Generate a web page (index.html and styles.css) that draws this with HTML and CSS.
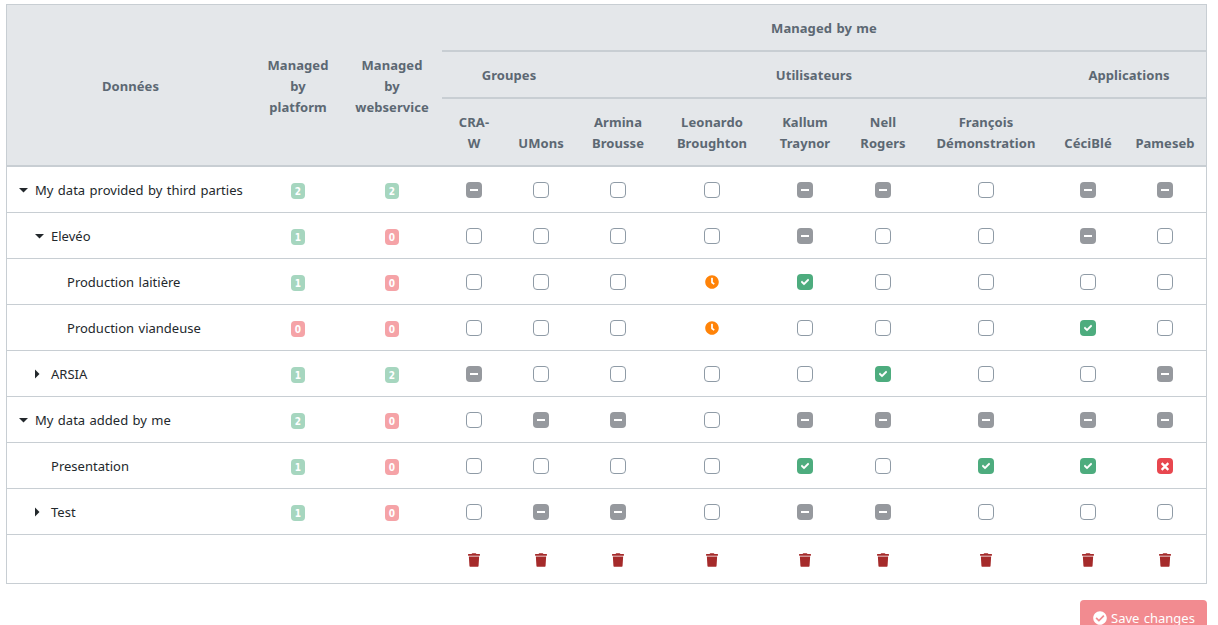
FILE: index.html
```html
<!DOCTYPE html>
<html lang="fr">
<head>
<meta charset="utf-8">
<title>Permissions</title>
<link rel="stylesheet" href="styles.css">
</head>
<body>
<svg class="sprite" aria-hidden="true">
  <symbol id="check" viewBox="0 0 512 512"><path stroke="#fff" stroke-width="40" d="M173.9 439.4L7.5 273c-10-10-10-26.200 0-36.200l36.200-36.200c10-10 26.200-10 36.200 0L192 312.700 432.100 72.600c10-10 26.200-10 36.200 0l36.200 36.200c10 10 10 26.200 0 36.200L210.100 439.400c-10 10-26.200 10-36.200 0z"/></symbol>
  <symbol id="times" viewBox="0 0 352 512"><path stroke="#fff" stroke-width="24" d="M242.700 256l100-100c12.300-12.300 12.300-32.200 0-44.500l-22.200-22.200c-12.300-12.300-32.200-12.300-44.500 0L176 189.300 76 89.300c-12.300-12.300-32.200-12.300-44.500 0L9.200 111.500c-12.300 12.300-12.300 32.200 0 44.500l100 100-100 100c-12.300 12.300-12.300 32.200 0 44.500l22.200 22.200c12.300 12.300 32.200 12.300 44.500 0l100-100 100 100c12.300 12.300 32.200 12.300 44.500 0l22.200-22.200c12.300-12.300 12.300-32.200 0-44.500z"/></symbol>
  <symbol id="clock" viewBox="0 0 512 512"><path d="M256 8C119 8 8 119 8 256s111 248 248 248 248-111 248-248S393 8 256 8zm92.500 313l-20 25a16 16 0 0 1-22.500 2.500l-67-49.700a40 40 0 0 1-15-31.200V112a16 16 0 0 1 16-16h32a16 16 0 0 1 16 16v144l58 42.500a16 16 0 0 1 2.500 22.500z"/></symbol>
  <symbol id="trash" viewBox="0 0 448 512"><path d="M432 32H312l-9.400-18.700A24 24 0 0 0 281.100 0H166.800a23.700 23.700 0 0 0-21.400 13.300L136 32H16A16 16 0 0 0 0 48v32a16 16 0 0 0 16 16h416a16 16 0 0 0 16-16V48a16 16 0 0 0-16-16zM53.200 467a48 48 0 0 0 47.900 45h245.800a48 48 0 0 0 47.900-45L416 128H32z"/></symbol>
  <symbol id="check-circle" viewBox="0 0 512 512"><path d="M504 256c0 137-111 248-248 248S8 393 8 256 119 8 256 8s248 111 248 248zM227.300 387.300l184-184c6.200-6.200 6.200-16.400 0-22.600l-22.600-22.600c-6.200-6.200-16.400-6.200-22.600 0L216 308.100l-70.100-70.100c-6.200-6.200-16.400-6.200-22.600 0l-22.600 22.600c-6.200 6.200-6.200 16.400 0 22.600l104 104c6.200 6.300 16.400 6.300 22.600.100z"/></symbol>
</svg>
<table class="grid">
  <colgroup>
    <col class="c-data"><col class="c-platform"><col class="c-web"><col class="c-craw"><col class="c-umons"><col class="c-armina"><col class="c-leonardo"><col class="c-kallum"><col class="c-nell"><col class="c-francois"><col class="c-ceci"><col class="c-pameseb">
  </colgroup>
  <thead>
    <tr><th rowspan="3" class="mid">Données</th><th rowspan="3" class="mid">Managed by platform</th><th rowspan="3" class="mid">Managed by webservice</th><th colspan="9">Managed by me</th></tr>
    <tr><th colspan="2">Groupes</th><th colspan="5">Utilisateurs</th><th colspan="2">Applications</th></tr>
    <tr><th>CRA-W</th><th>UMons</th><th>Armina Brousse</th><th>Leonardo Broughton</th><th>Kallum Traynor</th><th>Nell Rogers</th><th>François Démonstration</th><th>CéciBlé</th><th>Pameseb</th></tr>
  </thead>
  <tbody id="rows"></tbody>
</table>
<div class="actions"><button class="save"><svg><use href="#check-circle"/></svg>Save changes</button></div>
<script src="app.js"></script>
</body>
</html>
```
FILE: styles.css
```css
* { box-sizing: border-box; }
html { overflow: hidden; }
body { margin: 0; padding: 4px 11px 0 6px; font: 13px/21px "Noto Sans", sans-serif; color: #23282c; background: #fff; }
.sprite { display: none; }
.grid { width: 1201px; table-layout: fixed; border: 1px solid #c8ced3; border-collapse: separate; border-spacing: 0; }
.c-data { width: 247px; }
.c-platform { width: 88px; }
.c-web { width: 100px; }
.c-craw { width: 64px; }
.c-umons { width: 70px; }
.c-armina { width: 84px; }
.c-leonardo { width: 104px; }
.c-kallum { width: 82px; }
.c-nell { width: 74px; }
.c-francois { width: 132px; }
.c-ceci { width: 72px; }
.c-pameseb { width: 82px; }
th { padding: 13px 11px 11px; color: #5c6873; background: #e4e7ea; border-bottom: 2px solid #c8ced3; vertical-align: bottom; text-align: center; font-weight: 700; letter-spacing: .06px; word-spacing: 1px; }
th.mid { vertical-align: middle; }
td { height: 46px; padding: 0; border-bottom: 1px solid #c8ced3; text-align: center; vertical-align: middle; }
tr:last-child td { height: 48px; border-bottom: 0; }
.label { display: flex; align-items: center; padding-left: 12px; letter-spacing: .01px; word-spacing: 1px; }
.label span { padding-top: 2px; }
.depth-1 { padding-left: 28px; }
.depth-2 { padding-left: 44px; }
.depth-3 { padding-left: 60px; }
.arrow { width: 16px; height: 10px; fill: #23282c; }
.badge { display: block; width: 14px; height: 16px; margin: 3px auto 0; border-radius: 4px; color: #fff; font: 700 10px/17px "DejaVu Sans Condensed", "DejaVu Sans", sans-serif; }
.badge.some { background: #a6d6bf; }
.badge.none { background: #f5a3a7; }
.box { display: flex; align-items: center; justify-content: center; width: 16px; height: 16px; margin: 1px auto 0; border-radius: 4px; fill: #fff; }
.box.off { border: 1px solid #8f9ba6; }
.box.partial { background: #96999e; }
.box.partial::before { content: ""; width: 8px; height: 2px; background: #fff; }
.box.yes { background: #4dac7e; }
.box.no { background: #e8474f; }
.box.yes svg { width: 8px; height: 8px; }
.box.no svg { width: 8px; height: 11px; }
.wait { display: block; width: 14px; height: 14px; margin: 0 auto; fill: #ff8308; }
.trash { display: block; width: 12px; height: 14px; margin: 2px auto 0; fill: #a52a2a; }
.actions { display: flex; justify-content: flex-end; margin-top: 16px; }
.save { display: flex; align-items: center; gap: 4px; width: 127px; height: 35px; padding: 1px 13px 0; border: 0; border-radius: 4px; background: #f28b90; color: #fff; font: 13px/21px "Noto Sans", sans-serif; word-spacing: 1px; white-space: nowrap; }
.save svg { flex: none; width: 14px; height: 14px; fill: #fff; }
```
FILE: app.js
```js
// Cell codes: o = unchecked, p = partial, y = granted, n = refused, w = pending
const rows = [
  [0, 'down', 'My data provided by third parties', 2, 2, 'poooppopp'],
  [1, 'down', 'Elevéo', 1, 0, 'oooopoopo'],
  [2, '', 'Production laitière', 1, 0, 'ooowyoooo'],
  [2, '', 'Production viandeuse', 0, 0, 'ooowoooyo'],
  [1, 'right', 'ARSIA', 1, 2, 'pooooyoop'],
  [0, 'down', 'My data added by me', 2, 0, 'oppoppppp'],
  [1, '', 'Presentation', 1, 0, 'ooooyoyyn'],
  [1, 'right', 'Test', 1, 0, 'oppoppooo']
];
const cells = {
  o: '<span class="box off"></span>',
  p: '<span class="box partial"></span>',
  y: '<span class="box yes"><svg><use href="#check"/></svg></span>',
  n: '<span class="box no"><svg><use href="#times"/></svg></span>',
  w: '<svg class="wait"><use href="#clock"/></svg>'
};
const arrows = {
  down: '<svg class="arrow"><path d="M0 3h9L4.500 7.500z"/></svg>',
  right: '<svg class="arrow"><path d="M0 .5v9L4.500 5z"/></svg>',
  '': ''
};
const badge = n => `<td><span class="badge ${n ? 'some' : 'none'}">${n}</span></td>`;
const td = html => `<td>${html}</td>`;
// Leaf rows have no arrow, so their text starts one level deeper
document.getElementById('rows').innerHTML = rows.map(([depth, arrow, name, platform, web, states]) => {
  const indent = arrow ? depth : depth + 1;
  return `<tr><td><div class="label depth-${indent}">${arrows[arrow]}<span>${name}</span></div></td>${badge(platform)}${badge(web)}${[...states].map(s => td(cells[s])).join('')}</tr>`;
}).join('') + `<tr><td></td><td></td><td></td>${td('<svg class="trash"><use href="#trash"/></svg>').repeat(9)}</tr>`;
```
